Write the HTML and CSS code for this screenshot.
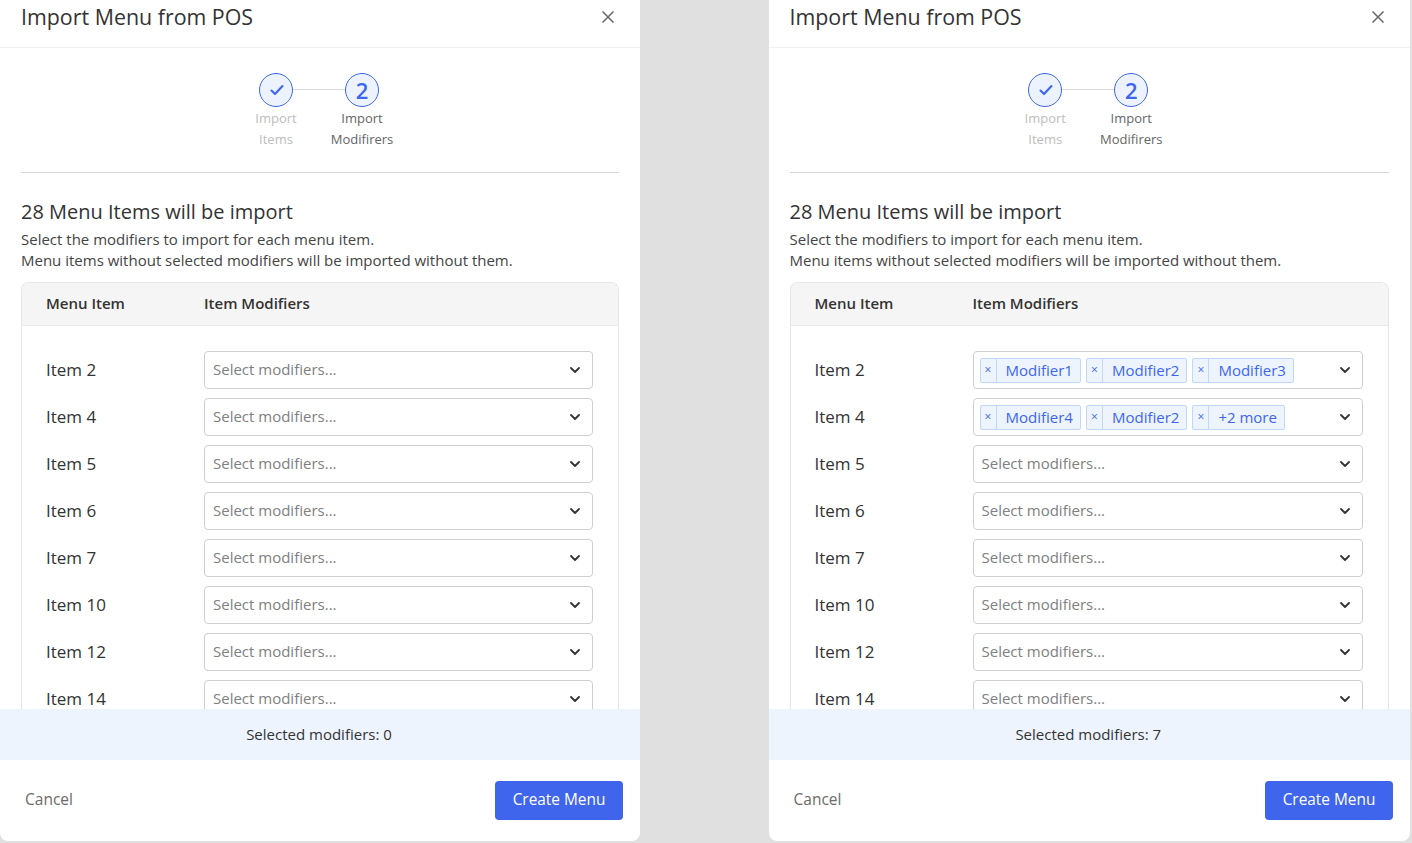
FILE: index.html
```html
<!DOCTYPE html>
<html lang="en">
<head>
<meta charset="utf-8">
<title>Import Menu from POS</title>
<link rel="stylesheet" href="styles.css">
</head>
<body>
<svg class="defs" width="0" height="0" aria-hidden="true">
  <symbol id="chev" viewBox="0 0 10 6"><path d="M1 1l4 4 4-4" fill="none" stroke="currentColor" stroke-width="1.8" stroke-linecap="round" stroke-linejoin="round"/></symbol>
</svg>
<main class="desk">
  <section class="modal">
    <header class="head"><h1>Import Menu from POS</h1><svg class="close" viewBox="0 0 12 12"><path d="M.5.5l11 11M11.500.5l-11 11" stroke="currentColor" stroke-width="1.500" fill="none"/></svg></header>
    <div class="content">
      <div class="stepper">
        <div class="step done"><span class="dot"><svg viewBox="0 0 14 12" class="check"><path d="M1.500 6.500 5 10l7.500-8" fill="none" stroke="currentColor" stroke-width="2.100" stroke-linecap="round" stroke-linejoin="round"/></svg></span><span class="lbl">Import<br>Items</span></div>
        <div class="step"><span class="dot">2</span><span class="lbl">Import<br>Modifirers</span></div>
      </div>
      <h2>28 Menu Items will be import</h2>
      <p class="desc">Select the modifiers to import for each menu item.<br>Menu items without selected modifiers will be imported without them.</p>
      <div class="table">
        <div class="thead"><span class="c1">Menu Item</span><span>Item Modifiers</span></div>
        <div class="tbody">
          <div class="row"><span class="c1">Item 2</span><div class="select"><span class="ph">Select modifiers...</span><svg class="chev"><use href="#chev"/></svg></div></div>
          <div class="row"><span class="c1">Item 4</span><div class="select"><span class="ph">Select modifiers...</span><svg class="chev"><use href="#chev"/></svg></div></div>
          <div class="row"><span class="c1">Item 5</span><div class="select"><span class="ph">Select modifiers...</span><svg class="chev"><use href="#chev"/></svg></div></div>
          <div class="row"><span class="c1">Item 6</span><div class="select"><span class="ph">Select modifiers...</span><svg class="chev"><use href="#chev"/></svg></div></div>
          <div class="row"><span class="c1">Item 7</span><div class="select"><span class="ph">Select modifiers...</span><svg class="chev"><use href="#chev"/></svg></div></div>
          <div class="row"><span class="c1">Item 10</span><div class="select"><span class="ph">Select modifiers...</span><svg class="chev"><use href="#chev"/></svg></div></div>
          <div class="row"><span class="c1">Item 12</span><div class="select"><span class="ph">Select modifiers...</span><svg class="chev"><use href="#chev"/></svg></div></div>
          <div class="row"><span class="c1">Item 14</span><div class="select"><span class="ph">Select modifiers...</span><svg class="chev"><use href="#chev"/></svg></div></div>
        </div>
      </div>
    </div>
    <div class="summary">Selected modifiers: 0</div>
    <footer class="foot"><span class="cancel">Cancel</span><button class="create">Create Menu</button></footer>
  </section>

  <section class="modal wide">
    <header class="head"><h1>Import Menu from POS</h1><svg class="close" viewBox="0 0 12 12"><path d="M.5.5l11 11M11.500.5l-11 11" stroke="currentColor" stroke-width="1.500" fill="none"/></svg></header>
    <div class="content">
      <div class="stepper">
        <div class="step done"><span class="dot"><svg viewBox="0 0 14 12" class="check"><path d="M1.500 6.500 5 10l7.500-8" fill="none" stroke="currentColor" stroke-width="2.100" stroke-linecap="round" stroke-linejoin="round"/></svg></span><span class="lbl">Import<br>Items</span></div>
        <div class="step"><span class="dot">2</span><span class="lbl">Import<br>Modifirers</span></div>
      </div>
      <h2>28 Menu Items will be import</h2>
      <p class="desc">Select the modifiers to import for each menu item.<br>Menu items without selected modifiers will be imported without them.</p>
      <div class="table">
        <div class="thead"><span class="c1">Menu Item</span><span>Item Modifiers</span></div>
        <div class="tbody">
          <div class="row"><span class="c1">Item 2</span><div class="select chips"><span class="tag"><i>×</i><b>Modifier1</b></span><span class="tag"><i>×</i><b>Modifier2</b></span><span class="tag"><i>×</i><b>Modifier3</b></span><svg class="chev"><use href="#chev"/></svg></div></div>
          <div class="row"><span class="c1">Item 4</span><div class="select chips"><span class="tag"><i>×</i><b>Modifier4</b></span><span class="tag"><i>×</i><b>Modifier2</b></span><span class="tag"><i>×</i><b>+2 more</b></span><svg class="chev"><use href="#chev"/></svg></div></div>
          <div class="row"><span class="c1">Item 5</span><div class="select"><span class="ph">Select modifiers...</span><svg class="chev"><use href="#chev"/></svg></div></div>
          <div class="row"><span class="c1">Item 6</span><div class="select"><span class="ph">Select modifiers...</span><svg class="chev"><use href="#chev"/></svg></div></div>
          <div class="row"><span class="c1">Item 7</span><div class="select"><span class="ph">Select modifiers...</span><svg class="chev"><use href="#chev"/></svg></div></div>
          <div class="row"><span class="c1">Item 10</span><div class="select"><span class="ph">Select modifiers...</span><svg class="chev"><use href="#chev"/></svg></div></div>
          <div class="row"><span class="c1">Item 12</span><div class="select"><span class="ph">Select modifiers...</span><svg class="chev"><use href="#chev"/></svg></div></div>
          <div class="row"><span class="c1">Item 14</span><div class="select"><span class="ph">Select modifiers...</span><svg class="chev"><use href="#chev"/></svg></div></div>
        </div>
      </div>
    </div>
    <div class="summary">Selected modifiers: 7</div>
    <footer class="foot"><span class="cancel">Cancel</span><button class="create">Create Menu</button></footer>
  </section>
</main>
</body>
</html>
```
FILE: styles.css
```css
* { box-sizing: border-box; }
html, body { margin: 0; height: 100%; }
body { background: #e0e0e0; font-family: "Open Sans", "Noto Sans", sans-serif; color: #2b2b2b; overflow: hidden; }
.defs { display: block; height: 0; }
.desk { display: flex; gap: 128.5px; height: 841px; width: 1412px; }
.modal { width: 640px; height: 841px; background: #fff; border-radius: 0 0 8px 8px; display: flex; flex-direction: column; overflow: hidden; }
.modal.wide { width: 641.5px; }
.head { height: 48px; flex: none; border-bottom: 1px solid #f1f1f1; display: flex; justify-content: space-between; align-items: flex-start; padding: 0 26px 0 21px; }
.head h1 { margin: 0; font-size: 21.4px; font-weight: 400; line-height: 33px; color: #333; }
.close { width: 12px; height: 12px; margin-top: 11px; color: #666; }
.content { flex: 1; min-height: 0; overflow: hidden; padding: 0 21px; display: flex; flex-direction: column; }
.stepper { flex: none; height: 125px; border-bottom: 1px solid #d6d6d6; display: flex; justify-content: center; padding: 25px 2px 0 0; }
.step { width: 86px; display: flex; flex-direction: column; align-items: center; position: relative; font-size: 13px; line-height: 21px; color: #666; }
.step + .step::before { content: ""; position: absolute; top: 16px; left: -26px; width: 52px; height: 1px; background: #d9d9d9; }
.dot { width: 34px; height: 34px; border-radius: 50%; border: 1.5px solid #3d66ee; background: #edf3fe; color: #3d66ee; display: flex; align-items: center; justify-content: center; font-size: 22px; font-weight: 600; line-height: 1; position: relative; }
.done .dot { padding-left: 1px; }
.check { width: 14px; height: 12px; }
.lbl { text-align: center; margin-top: 1px; white-space: nowrap; }
.done .lbl { color: #bdbdbd; }
h2 { flex: none; margin: 27px 0 0; font-size: 20px; line-height: 24px; font-weight: 500; color: #333; }
.desc { flex: none; margin: 5px 0 11px; font-size: 15px; line-height: 21px; color: #444; }
.table { flex: 1; min-height: 0; border: 1px solid #e6e6e6; border-bottom: 0; border-radius: 8px 8px 0 0; overflow: hidden; }
.thead { height: 43px; background: #f5f5f5; border-bottom: 1px solid #e9e9e9; display: flex; align-items: center; padding: 0 24px 2px; font-size: 15px; font-weight: 600; color: #333; }
.c1 { width: 158px; flex: none; }
.tbody { padding: 25px 25px 0 24px; }
.row { display: flex; align-items: center; height: 38px; margin-bottom: 9px; font-size: 17px; color: #333; }
.row .c1 { margin-top: -2px; }
.select { flex: 1; height: 38px; border: 1px solid #cfcfcf; border-radius: 4px; display: flex; align-items: center; padding: 0 12px 0 8px; font-size: 15px; }
.ph { color: #808080; flex: 1; margin-top: -2px; }
.chev { width: 10px; height: 6px; color: #333; margin-left: auto; }
.chips { padding-left: 6px; gap: 5px; }
.tag { height: 25px; display: flex; border: 1px solid #bfd8fb; border-radius: 2px; background: #edf4fe; color: #3d66ee; font-size: 15px; line-height: 22px; }
.tag i { width: 16px; border-right: 1px solid #bfd8fb; font-style: normal; font-size: 12px; text-align: center; }
.tag b { font-weight: 400; padding: 0 7px 0 9px; }
.summary { flex: none; height: 51px; background: #edf4fe; display: flex; align-items: center; justify-content: center; font-size: 15px; color: #333; padding: 0 2px 2px 0; }
.foot { flex: none; height: 81px; display: flex; align-items: center; justify-content: space-between; padding: 0 17px 1px 25px; }
.cancel { font-size: 15.5px; font-weight: 500; color: #6b6b6b; margin-top: -2px; }
.create { width: 128px; height: 39px; border: 0; border-radius: 4px; background: #3f65ec; color: #fff; font: 500 15.4px "Open Sans", sans-serif; padding: 0 0 2px; }
```
